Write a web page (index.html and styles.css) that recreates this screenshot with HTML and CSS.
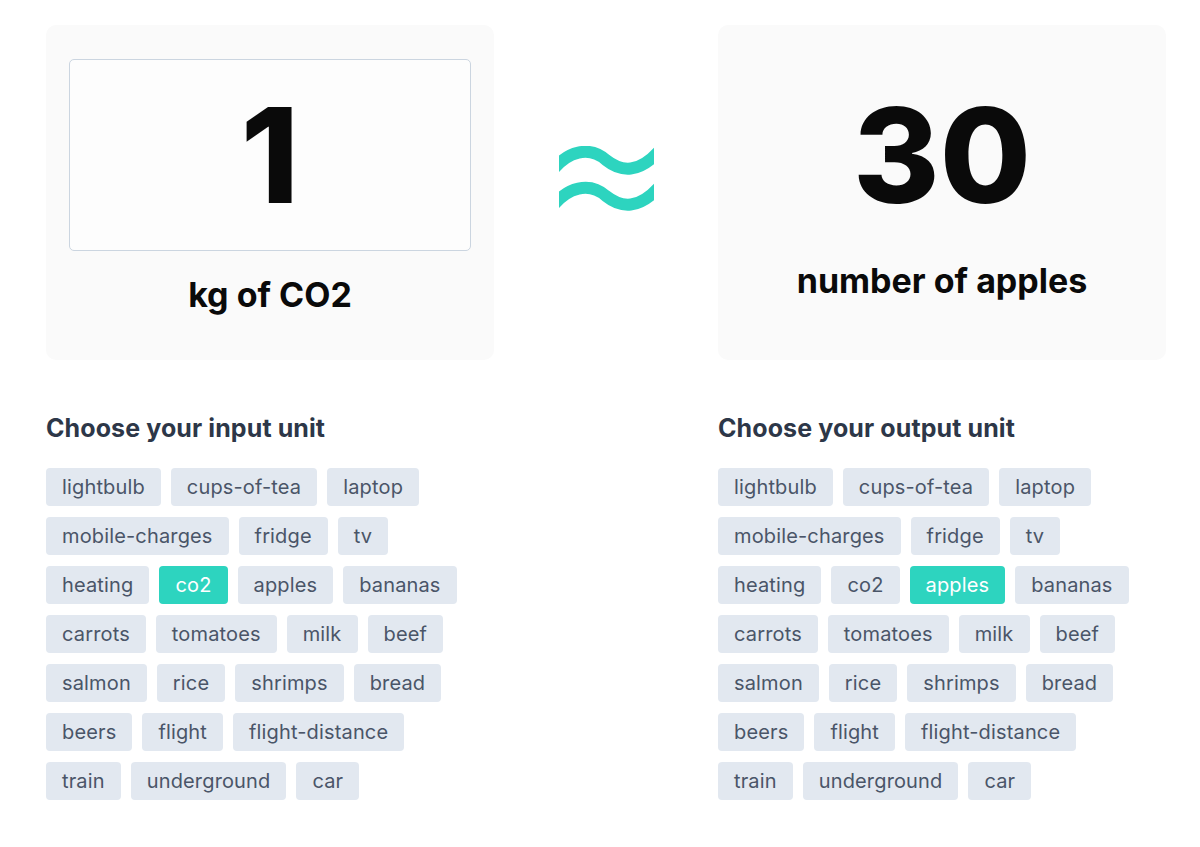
FILE: index.html
```html
<!DOCTYPE html>
<html lang="en">
<head>
<meta charset="utf-8">
<title>CO2 converter</title>
<link rel="stylesheet" href="styles.css">
</head>
<body>
<main class="page">
  <section class="top">
    <div class="card card-in">
      <div class="input-box"><span class="num">1</span></div>
      <div class="unit unit-in">kg of CO2</div>
    </div>
    <div class="approx">
      <svg width="95" height="66" viewBox="0 0 95 66" aria-hidden="true">
        <path d="M-6 24 C 8 6, 30 -1, 47 14 C 62 26, 80 28, 101 4" fill="none" stroke="#2dd4bf" stroke-width="12"/>
        <path d="M-6 60 C 8 42, 30 35, 47 50 C 62 62, 80 64, 101 40" fill="none" stroke="#2dd4bf" stroke-width="12"/>
      </svg>
    </div>
    <div class="card card-out">
      <div class="num num-out">30</div>
      <div class="unit unit-out">number of apples</div>
    </div>
  </section>
  <section class="pickers">
    <div class="picker">
      <h2 class="picker-title">Choose your input unit</h2>
      <div class="chips">
        <span class="chip">lightbulb</span><span class="chip">cups-of-tea</span><span class="chip">laptop</span>
        <span class="chip">mobile-charges</span><span class="chip">fridge</span><span class="chip">tv</span>
        <span class="chip">heating</span><span class="chip chip-active">co2</span><span class="chip">apples</span><span class="chip">bananas</span>
        <span class="chip">carrots</span><span class="chip">tomatoes</span><span class="chip">milk</span><span class="chip">beef</span>
        <span class="chip">salmon</span><span class="chip">rice</span><span class="chip">shrimps</span><span class="chip">bread</span>
        <span class="chip">beers</span><span class="chip">flight</span><span class="chip">flight-distance</span>
        <span class="chip">train</span><span class="chip">underground</span><span class="chip">car</span>
      </div>
    </div>
    <div class="picker">
      <h2 class="picker-title">Choose your output unit</h2>
      <div class="chips">
        <span class="chip">lightbulb</span><span class="chip">cups-of-tea</span><span class="chip">laptop</span>
        <span class="chip">mobile-charges</span><span class="chip">fridge</span><span class="chip">tv</span>
        <span class="chip">heating</span><span class="chip">co2</span><span class="chip chip-active">apples</span><span class="chip">bananas</span>
        <span class="chip">carrots</span><span class="chip">tomatoes</span><span class="chip">milk</span><span class="chip">beef</span>
        <span class="chip">salmon</span><span class="chip">rice</span><span class="chip">shrimps</span><span class="chip">bread</span>
        <span class="chip">beers</span><span class="chip">flight</span><span class="chip">flight-distance</span>
        <span class="chip">train</span><span class="chip">underground</span><span class="chip">car</span>
      </div>
    </div>
  </section>
</main>
</body>
</html>
```

FILE: styles.css
```css
* { box-sizing: border-box; }

html, body {
  margin: 0;
  padding: 0;
  background: #ffffff;
}

body {
  font-family: Inter, "Noto Sans", "Liberation Sans", sans-serif;
  color: #0a0a0a;
}

.page {
  padding: 25px 34px 0 46px;
}

.top {
  display: grid;
  grid-template-columns: 448px 224px 448px;
  height: 335px;
}

.card {
  background: #fafafa;
  border-radius: 10px;
  display: flex;
  flex-direction: column;
  align-items: center;
}

.card-in {
  padding: 34px 23px 0;
}

.card-out {
  padding: 64px 23px 0;
}

.input-box {
  width: 100%;
  height: 192px;
  background: #fdfdfd;
  border: 1px solid #cbd5e0;
  border-radius: 5px;
  display: flex;
  align-items: center;
  justify-content: center;
}

.num {
  font-size: 132px;
  line-height: 132px;
  font-weight: 800;
  color: #0a0a0a;
}

.unit {
  font-size: 34px;
  line-height: 40px;
  font-weight: 700;
  color: #0a0a0a;
}

.unit-in {
  margin-top: 24px;
}

.unit-out {
  margin-top: 40px;
}

.approx {
  display: flex;
  justify-content: center;
  padding-top: 121px;
}

.approx svg {
  display: block;
}

.pickers {
  display: grid;
  grid-template-columns: 448px 448px;
  column-gap: 224px;
  margin-top: 52px;
}

.picker-title {
  margin: 0 0 24px;
  font-size: 25px;
  line-height: 32px;
  font-weight: 700;
  color: #2d3748;
  letter-spacing: 0.1px;
}

.chips {
  display: flex;
  flex-wrap: wrap;
  column-gap: 10px;
  row-gap: 11px;
  max-width: 430px;
}

.chip {
  display: inline-block;
  height: 38px;
  padding: 0 16px;
  line-height: 38px;
  font-size: 20px;
  letter-spacing: 0.15px;
  color: #4a5568;
  background: #e2e8f0;
  border-radius: 4px;
  white-space: nowrap;
}

.chip-active {
  background: #2dd4bf;
  color: #ffffff;
}
```
